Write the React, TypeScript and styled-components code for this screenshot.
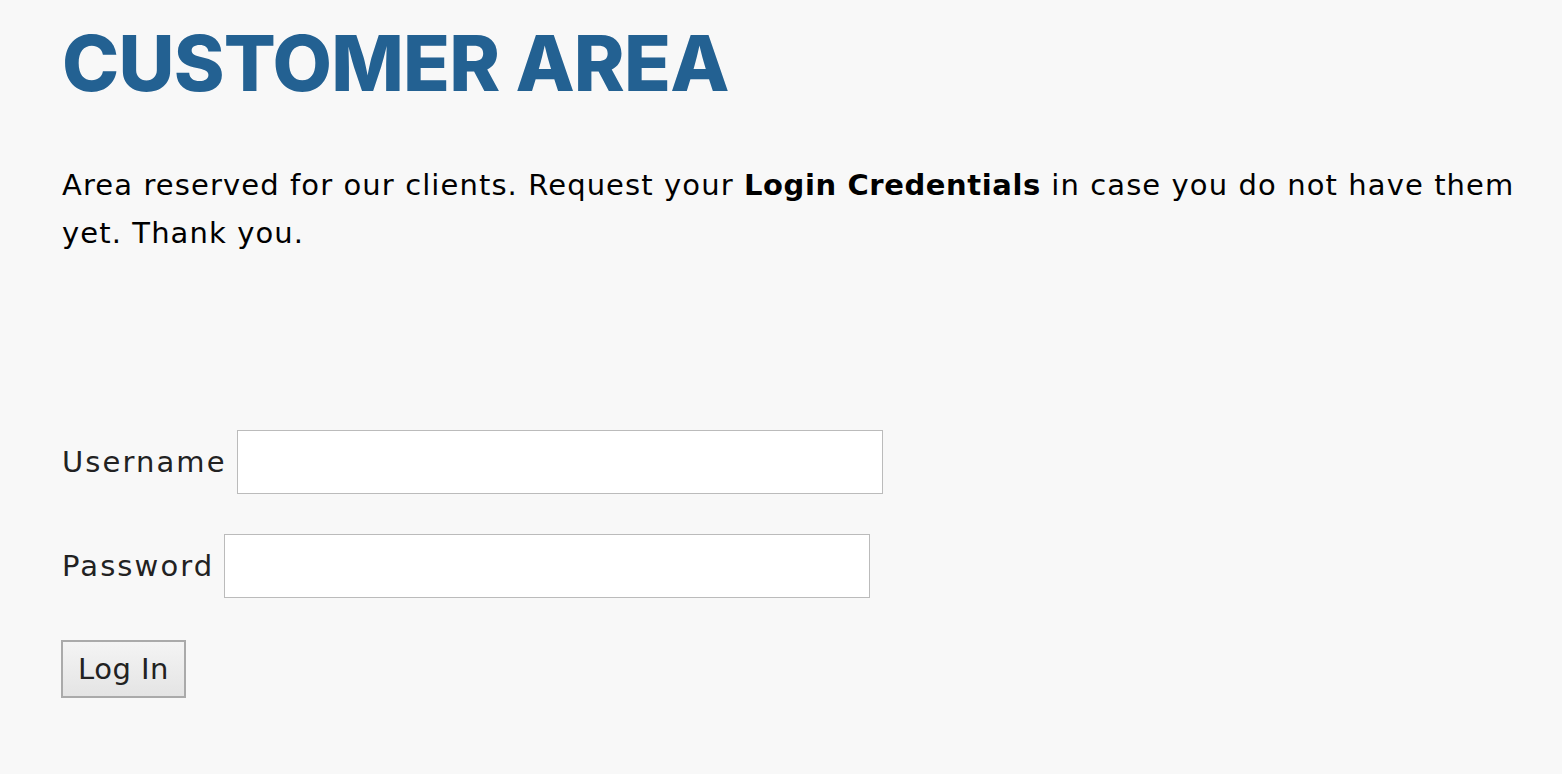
import React from 'react';
import styled, { createGlobalStyle } from 'styled-components';

const GlobalStyle = createGlobalStyle`
  html, body {
    margin: 0;
    padding: 0;
    background: #f8f8f8;
  }
  body {
    font-family: "DejaVu Sans", "Open Sans", sans-serif;
    color: #000;
  }
`;

const App = () => {
  return (
    <Page>
      <GlobalStyle />
      <Title>CUSTOMER AREA</Title>
      <Intro>
        Area reserved for our clients. Request your <strong>Login Credentials</strong> in case you do
        not have them yet. Thank you.
      </Intro>
      <LoginForm onSubmit={(e) => e.preventDefault()}>
        <Field>
          <Label htmlFor="user_login">Username</Label>
          <Input id="user_login" type="text" />
        </Field>
        <Field>
          <Label htmlFor="user_pass">Password</Label>
          <Input id="user_pass" type="password" />
        </Field>
        <SubmitButton type="submit">Log In</SubmitButton>
      </LoginForm>
    </Page>
  );
};

const Page = styled.div`
  padding: 18px 40px 40px 62px;
  box-sizing: border-box;
  width: 1562px;
  min-height: 774px;
`;

const Title = styled.h1`
  margin: 0;
  font-family: Inter, sans-serif;
  font-weight: 800;
  font-size: 77px;
  line-height: 90px;
  letter-spacing: -0.8px;
  color: #236192;
`;

const Intro = styled.p`
  margin: 53px 0 0;
  font-size: 29px;
  line-height: 48px;
  letter-spacing: 1.1px;
  max-width: 1475px;

  strong {
    font-weight: 700;
    letter-spacing: 0.6px;
  }
`;

const LoginForm = styled.form`
  margin-top: 173px;
  display: flex;
  flex-direction: column;
  align-items: flex-start;
  gap: 40px;
`;

const Field = styled.div`
  display: flex;
  align-items: center;
  gap: 10px;
`;

const Label = styled.label`
  font-size: 29px;
  letter-spacing: 2.1px;
  color: #222;
`;

const Input = styled.input`
  width: 646px;
  height: 64px;
  box-sizing: border-box;
  border: 1px solid #bbb;
  background: #fff;
  outline: none;
  font-size: 24px;
  padding: 0 12px;
`;

const SubmitButton = styled.button`
  height: 58px;
  margin: 2px 0 0 -1px;
  padding: 0 15px;
  font-family: "DejaVu Sans", sans-serif;
  font-size: 29px;
  letter-spacing: 0.5px;
  color: #222;
  border: 2px solid #aaa;
  background: linear-gradient(#f4f4f4, #e4e4e4);
  cursor: pointer;
`;

export default App;
